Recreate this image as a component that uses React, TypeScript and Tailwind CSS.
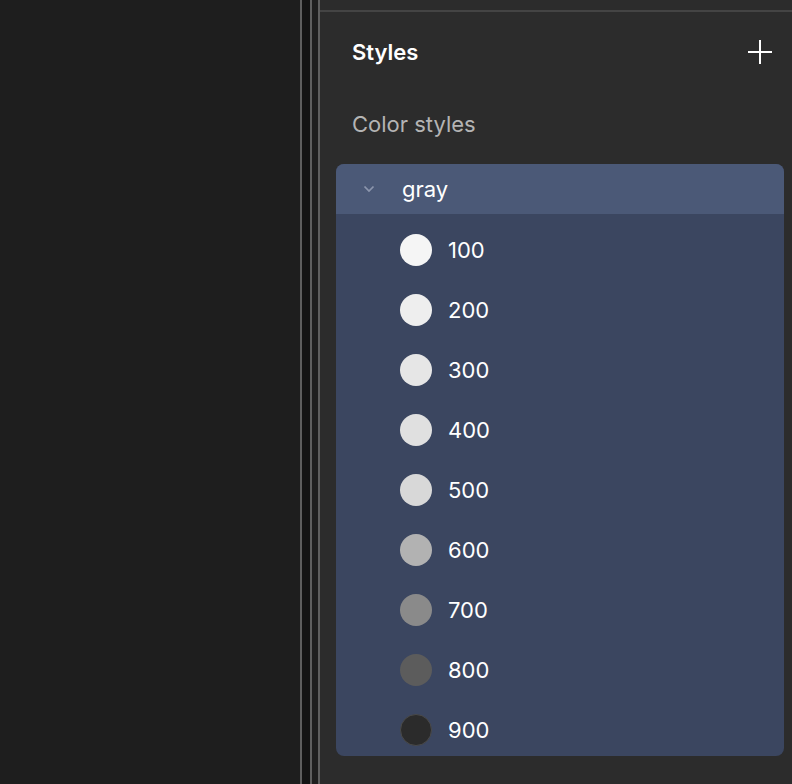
import React from "react";

const swatches = [
  { n: "100", c: "bg-[#f5f5f5]" },
  { n: "200", c: "bg-[#eeeeee]" },
  { n: "300", c: "bg-[#e6e6e6]" },
  { n: "400", c: "bg-[#e0e0e0]" },
  { n: "500", c: "bg-[#d8d8d8]" },
  { n: "600", c: "bg-[#b2b2b2]" },
  { n: "700", c: "bg-[#8a8a8a]" },
  { n: "800", c: "bg-[#5c5c5c]" },
  { n: "900", c: "bg-[#2b2b2b] border border-[#4a4a4a]" },
];

export default function App() {
  return (
    <div
      className="flex h-[784px] w-[792px] overflow-hidden bg-[#1e1e1e]"
      style={{ fontFamily: "Inter, 'Noto Sans', sans-serif" }}
    >
      <div className="w-[300px] shrink-0 bg-[#1e1e1e]" />
      <div className="w-[2px] shrink-0 bg-[#5e5e5e]" />
      <div className="w-[8px] shrink-0 bg-[#141414]" />
      <div className="w-[2px] shrink-0 bg-[#5e5e5e]" />
      <div className="w-[6px] shrink-0 bg-[#1e1e1e]" />
      <div className="w-[2px] shrink-0 bg-[#5e5e5e]" />
      <div className="flex flex-1 flex-col bg-[#2c2c2c]">
        <div className="h-[10px] shrink-0" />
        <div className="h-[2px] shrink-0 bg-[#444444]" />
        <div className="flex h-[80px] shrink-0 items-center justify-between pl-[32px] pr-[20px]">
          <span className="text-[22px] leading-[28px] font-semibold text-white">Styles</span>
          <svg width="24" height="24" viewBox="0 0 24 24" fill="none">
            <path d="M12 0v24M0 12h24" stroke="#ffffff" strokeWidth="2" />
          </svg>
        </div>
        <div className="flex h-[64px] shrink-0 items-center pl-[32px]">
          <span className="text-[22px] leading-[28px] text-[#b4b4b4]">Color styles</span>
        </div>
        <div className="h-[8px] shrink-0" />
        <div className="ml-[16px] mr-[8px] h-[592px] shrink-0 overflow-hidden rounded-[8px] bg-[#3b4660]">
          <div className="flex h-[50px] items-center bg-[#4b5977]">
            <div className="flex w-[66px] justify-center">
              <svg width="12" height="8" viewBox="0 0 12 8" fill="none">
                <path d="M1.5 1.5l4.5 4.5 4.5-4.5" stroke="#8c96ad" strokeWidth="1.75" />
              </svg>
            </div>
            <span className="text-[22px] leading-[28px] text-white">gray</span>
          </div>
          <div className="pt-[6px]">
            {swatches.map((s) => (
              <div key={s.n} className="flex h-[60px] items-center pl-[64px]">
                <div className={`h-[32px] w-[32px] rounded-full ${s.c}`} />
                <span className="ml-[16px] text-[22px] leading-[28px] text-white">{s.n}</span>
              </div>
            ))}
          </div>
        </div>
      </div>
    </div>
  );
}
